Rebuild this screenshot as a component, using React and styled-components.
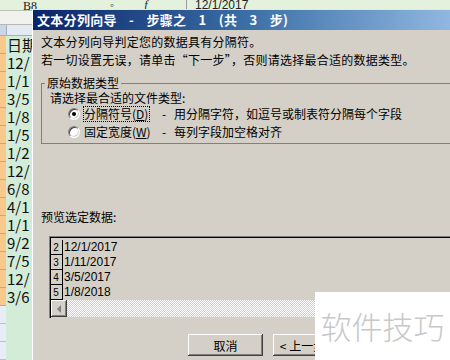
import React from "react";
import styled, { createGlobalStyle } from "styled-components";

const GlobalStyle = createGlobalStyle`
  html, body {
    margin: 0;
    padding: 0;
    background: #fff;
  }
  body {
    width: 450px;
    height: 360px;
    overflow: hidden;
    font-family: "Noto Sans CJK SC", sans-serif;
  }
`;

const Screen = styled.div`
  position: relative;
  width: 450px;
  height: 360px;
  overflow: hidden;
  background: #fff;
`;

/* ---------- spreadsheet behind the dialog ---------- */

const Sheet = styled.div`
  display: flex;
  flex-direction: column;
  width: 100%;
  height: 100%;
`;

const FormulaBar = styled.div`
  display: flex;
  align-items: flex-start;
  height: 12px;
  background: #e3f1dd;
  border-bottom: 1px solid #b9c4b4;
  font: 12px "Liberation Serif", serif;
  color: #222;
  overflow: hidden;
`;

const NameBox = styled.div`
  width: 100px;
  padding: 1px 0 0 23px;
  box-sizing: border-box;
  line-height: 11px;
`;

const FxArea = styled.div`
  width: 86px;
  display: flex;
  gap: 30px;
  padding-left: 10px;
  box-sizing: border-box;
  font-style: italic;
  line-height: 11px;
`;

const FormulaValue = styled.div`
  padding-left: 8px;
  border-left: 1px solid #999;
  line-height: 11px;
  font-family: "Liberation Sans", sans-serif;
`;

const Toolbar = styled.div`
  height: 15px;
  background: #f1f2ee;
  border-bottom: 1px solid #b8b8b8;
`;

const ColumnHeader = styled.div`
  display: flex;
  height: 11px;
  background: #e5eaf2;
  border-bottom: 1px solid #9eb0c8;
`;

const Corner = styled.div`
  width: 6px;
  background: #c9d6e8;
  border-right: 1px solid #9eb0c8;
`;

const GridRow = styled.div`
  display: flex;
  height: 18px;
  flex-shrink: 0;
`;

const RowHead = styled.div`
  width: 6px;
  background: ${({ $selected }) => ($selected ? "#f8c98a" : "#e6edf7")};
  border-bottom: 1px solid ${({ $selected }) => ($selected ? "#e0a455" : "#b6c2d3")};
  box-sizing: border-box;
`;

const Cell = styled.div`
  width: 26px;
  padding-left: 1px;
  background: #d3ecd7;
  border-right: 1px solid #a9b6aa;
  font: 15px/18px "Noto Sans CJK SC", sans-serif;
  color: #111;
  white-space: nowrap;
  overflow: hidden;
`;

/* ---------- dialog window ---------- */

const Dialog = styled.div`
  position: absolute;
  left: 32px;
  top: 9px;
  width: 470px;
  height: 380px;
  background: #d4d0c8;
  border-left: 1px solid #fff;
  border-top: 1px solid #e8e6e0;
  font: 12px/18px "Noto Sans CJK SC", sans-serif;
  color: #000;
`;

const TitleBar = styled.div`
  height: 20px;
  display: flex;
  align-items: center;
  padding-left: 4px;
  background: linear-gradient(to right, #0a246a 0%, #3a6ea5 45%, #a6caf0 100%);
  color: #fff;
  font-weight: bold;
  font-size: 13px;
  white-space: pre;
  word-spacing: 9px;
  letter-spacing: 0.3px;
`;

const Body = styled.div`
  display: flex;
  flex-direction: column;
  padding: 3px 0 0 8px;
`;

const Line = styled.div`
  line-height: 18px;
  white-space: nowrap;
  letter-spacing: 0.25px;
`;

const GroupBox = styled.fieldset`
  margin: 6px 0 0 0;
  padding: 0 8px 2px 8px;
  border: 1px solid #808080;
  min-width: 0;
`;

const Legend = styled.legend`
  margin-left: -5px;
  padding: 0 2px;
  line-height: 16px;
  background: #d4d0c8;
`;

const Prompt = styled.div`
  line-height: 14px;
`;

const Option = styled.div`
  display: flex;
  align-items: center;
  height: 18px;
  padding-left: 18px;
  white-space: nowrap;
`;

const Radio = styled.span`
  width: 12px;
  height: 12px;
  margin-right: 3px;
  border-radius: 50%;
  background: #fff;
  box-sizing: border-box;
  border: 1px solid;
  border-color: #808080 #fff #fff #808080;
  box-shadow: inset 1px 1px 0 #404040, inset -1px -1px 0 #d4d0c8;
  display: flex;
  align-items: center;
  justify-content: center;
  &::after {
    content: "";
    width: 4px;
    height: 4px;
    border-radius: 50%;
    background: ${({ $checked }) => ($checked ? "#000" : "transparent")};
  }
`;

const LabelCell = styled.span`
  width: 79px;
  display: flex;
`;

const Focus = styled.span`
  border: 1px dotted ${({ $active }) => ($active ? "#000" : "transparent")};
  padding-right: 1px;
  line-height: 14px;
  white-space: nowrap;
`;

const Dash = styled.span`
  width: 12px;
`;

const PreviewLabel = styled.div`
  margin-top: 65px;
  line-height: 16px;
`;

const PreviewBox = styled.div`
  margin: 11px 0 0 8px;
  height: 82px;
  box-sizing: border-box;
  padding-top: 3px;
  background: #d4d0c8;
  border-top: 1px solid #808080;
  border-left: 1px solid #808080;
  box-shadow: inset 1px 1px 0 #000;
  display: flex;
  flex-direction: column;
`;

const PreviewRow = styled.div`
  display: flex;
  height: 15px;
`;

const NumCell = styled.div`
  width: 12px;
  height: 13px;
  padding-top: 1px;
  border-right: 1px solid #000;
  border-bottom: 1px solid #000;
  font: 10px/13px "Liberation Sans", sans-serif;
  text-align: center;
  overflow: hidden;
`;

const DataCell = styled.div`
  padding-left: 1px;
  font: 12px/15px "Liberation Sans", sans-serif;
`;

const ScrollBar = styled.div`
  display: flex;
  height: 17px;
  margin-left: 1px;
`;

const ScrollButton = styled.div`
  width: 16px;
  height: 17px;
  background: #d4d0c8;
  box-shadow: inset -1px -1px 0 #404040, inset 1px 1px 0 #fff,
    inset -2px -2px 0 #808080;
  display: flex;
  align-items: center;
  justify-content: center;
  &::before {
    content: "";
    border-right: 4px solid #808080;
    border-top: 4px solid transparent;
    border-bottom: 4px solid transparent;
  }
`;

const ScrollTrack = styled.div`
  flex: 1;
  background: repeating-conic-gradient(#fff 0 25%, #d4d0c8 0 50%) 0 0 / 2px 2px;
`;

const ButtonRow = styled.div`
  display: flex;
  gap: 10px;
  margin-top: 16px;
  padding-left: 147px;
`;

const Button = styled.button`
  width: 75px;
  height: 22px;
  padding: 0;
  border: none;
  background: #d4d0c8;
  font: 12px "Noto Sans CJK SC", sans-serif;
  color: #000;
  white-space: nowrap;
  box-shadow: inset -1px -1px 0 #404040, inset 1px 1px 0 #fff,
    inset -2px -2px 0 #808080;
`;

const Watermark = styled.div`
  position: absolute;
  left: 315px;
  top: 292px;
  width: 135px;
  height: 68px;
  background: #fff;
  display: flex;
  align-items: center;
  justify-content: center;
  font: 300 31px "Noto Sans CJK SC", sans-serif;
  color: #c8c8c8;
  padding-bottom: 2px;
  box-sizing: border-box;
`;

// only the part of each cell that shows left of the dialog
const sheetRows = [
  "日期",
  "12/",
  "1/1",
  "3/5",
  "1/8",
  "1/5",
  "1/2",
  "12/",
  "6/8",
  "4/1",
  "1/1",
  "9/2",
  "7/5",
  "12/",
  "3/6",
  "",
  "",
  "",
];

const previewRows = [
  ["2", "12/1/2017"],
  ["3", "1/11/2017"],
  ["4", "3/5/2017"],
  ["5", "1/8/2018"],
];

export default function App() {
  return (
    <Screen>
      <GlobalStyle />
      <Sheet>
        <FormulaBar>
          <NameBox>B8</NameBox>
          <FxArea>
            <span>◦</span>
            <span>f</span>
          </FxArea>
          <FormulaValue>12/1/2017</FormulaValue>
        </FormulaBar>
        <Toolbar />
        <ColumnHeader>
          <Corner />
        </ColumnHeader>
        {sheetRows.map((v, i) => (
          <GridRow key={i}>
            <RowHead $selected={i < 15} />
            <Cell>{v}</Cell>
          </GridRow>
        ))}
      </Sheet>

      <Dialog>
        <TitleBar>文本分列向导 - 步骤之 1 (共 3 步)</TitleBar>
        <Body>
          <Line>文本分列向导判定您的数据具有分隔符。</Line>
          <Line>若一切设置无误，请单击“下一步”，否则请选择最合适的数据类型。</Line>
          <GroupBox>
            <Legend>原始数据类型</Legend>
            <Prompt>请选择最合适的文件类型:</Prompt>
            <Option>
              <Radio $checked />
              <LabelCell>
                <Focus $active>
                  分隔符号(<u>D</u>)
                </Focus>
              </LabelCell>
              <Dash>-</Dash>
              <span>用分隔字符，如逗号或制表符分隔每个字段</span>
            </Option>
            <Option>
              <Radio />
              <LabelCell>
                <Focus>
                  固定宽度(<u>W</u>)
                </Focus>
              </LabelCell>
              <Dash>-</Dash>
              <span>每列字段加空格对齐</span>
            </Option>
          </GroupBox>
          <PreviewLabel>预览选定数据:</PreviewLabel>
          <PreviewBox>
            {previewRows.map(([n, v]) => (
              <PreviewRow key={n}>
                <NumCell>{n}</NumCell>
                <DataCell>{v}</DataCell>
              </PreviewRow>
            ))}
            <ScrollBar>
              <ScrollButton />
              <ScrollTrack />
            </ScrollBar>
          </PreviewBox>
          <ButtonRow>
            <Button>取消</Button>
            <Button>&lt; 上一步(<u>B</u>)</Button>
          </ButtonRow>
        </Body>
      </Dialog>

      <Watermark>软件技巧</Watermark>
    </Screen>
  );
}
